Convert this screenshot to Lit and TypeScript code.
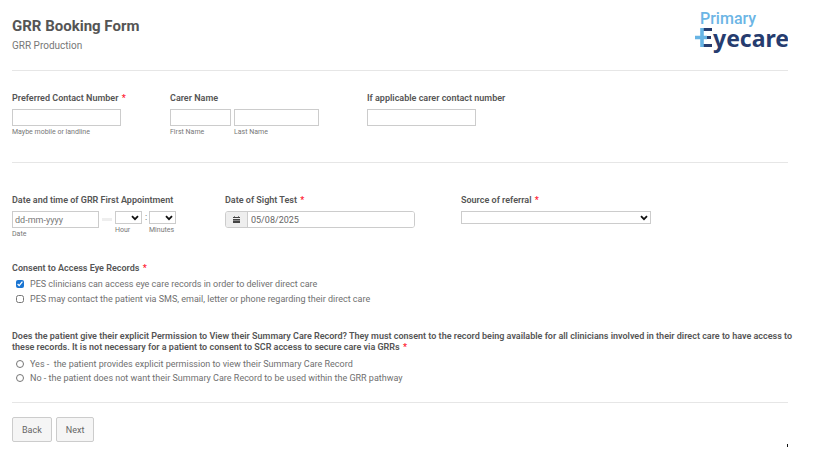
import { LitElement, html, css, svg } from "lit";
import { customElement } from "lit/decorators.js";

const chevron = html`<svg class="chevron" viewBox="0 0 8 6" aria-hidden="true">
  ${svg`<path d="M1 1.2 L4 4.2 L7 1.2" fill="none" stroke="#111" stroke-width="1.8" />`}
</svg>`;

const star = html`<span class="star">*</span>`;

@customElement("app-root")
export class AppRoot extends LitElement {
  static styles = css`
    :host {
      display: block;
      background: #fff;
      color: #555;
      font: 9px/12px Roboto, sans-serif;
    }
    *,
    *::before,
    *::after {
      box-sizing: border-box;
    }
    .page {
      padding: 9px 33px 9px 12px;
    }
    .head {
      display: flex;
      justify-content: space-between;
      height: 62px;
      border-bottom: 1px solid #e6e6e6;
    }
    h1 {
      margin: 7px 0 0;
      font-size: 15px;
      line-height: 20px;
      font-weight: 700;
    }
    .sub {
      margin: 4px 0 0;
      font-size: 10px;
      color: #777;
    }
    .logo {
      width: 94px;
      height: 46px;
      flex: none;
    }
    .row {
      display: grid;
    }
    .contact {
      grid-template-columns: 158fr 197fr 421fr;
      padding: 21px 0 24px;
      border-bottom: 1px solid #e6e6e6;
    }
    .visit {
      grid-template-columns: 213fr 236fr 327fr;
      padding-top: 31px;
    }
    fieldset {
      margin: 0;
      padding: 0;
      border: 0;
      min-width: 0;
    }
    legend,
    .title {
      display: block;
      padding: 0;
      font-weight: 600;
      color: #555;
    }
    .star {
      color: #f23;
      margin-left: 1px;
    }
    .controls {
      display: flex;
      align-items: flex-start;
      gap: 3px;
      margin-top: 5px;
    }
    .cell {
      display: block;
    }
    .hint {
      display: block;
      font-size: 7px;
      line-height: 11px;
      margin-top: 1px;
      color: #777;
    }
    input,
    select,
    button {
      font: inherit;
      color: #666;
      margin: 0;
    }
    .box {
      display: block;
      height: 17px;
      padding: 0 2px;
      border: 1px solid #ccc;
      border-radius: 0;
      background: #fff;
    }
    .box::placeholder {
      color: #777;
      opacity: 1;
    }
    .phone {
      width: 109px;
    }
    .first {
      width: 61px;
    }
    .last {
      width: 85px;
    }
    .date {
      width: 87px;
    }
    .dash {
      width: 10px;
      height: 3px;
      margin-top: 7px;
      background: #eee;
    }
    .colon {
      width: 1px;
    }
    .pick {
      display: grid;
      align-items: center;
    }
    .pick > * {
      grid-area: 1 / 1;
    }
    select {
      appearance: none;
      height: 13px;
      width: 27px;
      padding: 0;
      border: 1px solid #ccc;
      border-radius: 0;
      background: #fff;
    }
    .wide,
    .wide select {
      width: 190px;
    }
    .chevron {
      width: 8px;
      height: 6px;
      margin-right: 3px;
      justify-self: end;
      pointer-events: none;
    }
    .group {
      display: flex;
      width: 190px;
      height: 17px;
      border: 1px solid #ccc;
      border-radius: 3px;
      overflow: hidden;
    }
    .addon {
      display: grid;
      place-items: center;
      width: 22px;
      background: #eee;
      border-right: 1px solid #ccc;
    }
    .addon svg {
      width: 7px;
      height: 7px;
    }
    .group input {
      flex: 1;
      min-width: 0;
      border: 0;
      padding: 0 3px;
    }
    .consent {
      margin-top: 22px;
    }
    .permission {
      margin-top: 26px;
    }
    .permission legend {
      width: calc(100% + 18px);
      line-height: 11px;
    }
    .choices {
      display: grid;
      row-gap: 3px;
      padding: 4px 0 0 4px;
    }
    .permission .choices {
      padding-top: 5px;
      row-gap: 2px;
    }
    .choice {
      display: flex;
      align-items: center;
      gap: 6px;
      color: #707070;
      white-space: pre;
    }
    .choice input {
      width: 8px;
      height: 8px;
      accent-color: #1a75d2;
    }
    .foot {
      display: flex;
      gap: 4px;
      margin-top: 18px;
      padding-top: 14px;
      border-top: 1px solid #e6e6e6;
    }
    button {
      height: 25px;
      padding: 0 9px;
      border: 1px solid #ccc;
      border-radius: 2px;
      background: #f5f5f5;
    }
    .mark {
      width: 1px;
      height: 3px;
      margin: 27px 0 0 auto;
      background: #111;
    }
  `;

  render() {
    return html`<form class="page">
      <header class="head">
        <div>
          <h1>GRR Booking Form</h1>
          <p class="sub">GRR Production</p>
        </div>
        <svg class="logo" viewBox="0 0 94 46" role="img" aria-label="Primary Eyecare">
          <text x="6" y="15" font-family="Roboto" font-size="16" font-weight="500" fill="#6bb5e5">Primary</text>
          <path d="M8 20.500 H18 M12 28.500 H17 M8 36.500 H18" stroke="#263c6f" stroke-width="3.2" />
          <path d="M8 19 V38 M1 28.500 H13" stroke="#67b4e4" stroke-width="3.600" />
          <text x="19" y="38" font-family="Noto Sans" font-size="23" font-weight="700" fill="#263c6f">yecare</text>
        </svg>
      </header>

      <div class="row contact">
        <div>
          <label class="title" for="phone">Preferred Contact Number ${star}</label>
          <div class="controls">
            <div class="cell">
              <input class="box phone" id="phone" type="tel" />
              <span class="hint">Maybe mobile or landline</span>
            </div>
          </div>
        </div>
        <fieldset>
          <legend>Carer Name</legend>
          <div class="controls">
            <label class="cell"><input class="box first" /><span class="hint">First Name</span></label>
            <label class="cell"><input class="box last" /><span class="hint">Last Name</span></label>
          </div>
        </fieldset>
        <div>
          <label class="title" for="carer">If applicable carer contact number</label>
          <div class="controls"><input class="box phone" id="carer" type="tel" /></div>
        </div>
      </div>

      <div class="row visit">
        <fieldset>
          <legend>Date and time of GRR First Appointment</legend>
          <div class="controls">
            <label class="cell"><input class="box date" placeholder="dd-mm-yyyy" /><span class="hint">Date</span></label>
            <span class="dash"></span>
            <label class="cell">
              <span class="pick"><select><option></option></select>${chevron}</span>
              <span class="hint">Hour</span>
            </label>
            <span class="colon">:</span>
            <label class="cell">
              <span class="pick"><select><option></option></select>${chevron}</span>
              <span class="hint">Minutes</span>
            </label>
          </div>
        </fieldset>
        <div>
          <label class="title" for="sight">Date of Sight Test ${star}</label>
          <div class="controls">
            <div class="group">
              <span class="addon">
                <svg viewBox="0 0 7 7" aria-hidden="true">
                  <path d="M0 1h7v1H0z M0 3h7v1H0z M0 5h7v2H0z" fill="#444" />
                  <path d="M1 0h1v1H1z M5 0h1v1H5z M0 4h7v1H0z" fill="#888" />
                </svg>
              </span>
              <input id="sight" value="05/08/2025" />
            </div>
          </div>
        </div>
        <div>
          <label class="title" for="source">Source of referral ${star}</label>
          <div class="controls">
            <span class="pick wide"><select id="source"><option></option></select>${chevron}</span>
          </div>
        </div>
      </div>

      <fieldset class="consent">
        <legend>Consent to Access Eye Records ${star}</legend>
        <div class="choices">
          <label class="choice"><input type="checkbox" checked />PES clinicians can access eye care records in order to deliver direct care</label>
          <label class="choice"><input type="checkbox" />PES may contact the patient via SMS, email, letter or phone regarding their direct care</label>
        </div>
      </fieldset>

      <fieldset class="permission">
        <legend>
          Does the patient give their explicit Permission to View their Summary Care Record? They must consent to the
          record being available for all clinicians involved in their direct care to have access to these records. It is
          not necessary for a patient to consent to SCR access to secure care via GRRs ${star}
        </legend>
        <div class="choices">
          <label class="choice"><input type="radio" name="scr" />Yes -  the patient provides explicit permission to view their Summary Care Record</label>
          <label class="choice"><input type="radio" name="scr" />No - the patient does not want their Summary Care Record to be used within the GRR pathway</label>
        </div>
      </fieldset>

      <footer class="foot">
        <button type="button">Back</button>
        <button type="button">Next</button>
        <span class="mark"></span>
      </footer>
    </form>`;
  }
}
